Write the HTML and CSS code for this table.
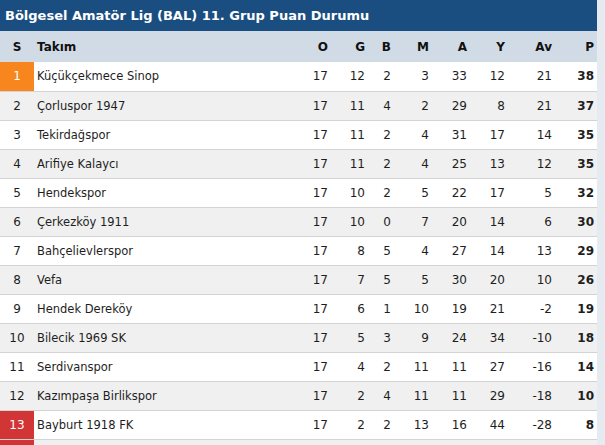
FILE: index.html
```html
<!DOCTYPE html>
<html lang="tr">
<head>
<meta charset="utf-8">
<link rel="stylesheet" href="styles.css">
</head>
<body>
<div class="standings">
  <div class="title">Bölgesel Amatör Lig (BAL) 11. Grup Puan Durumu</div>
  <table class="table">
    <colgroup>
      <col class="c-pos"><col class="c-team"><col class="c-o"><col class="c-g"><col class="c-b"><col class="c-m"><col class="c-a"><col class="c-y"><col class="c-av"><col class="c-p">
    </colgroup>
    <thead>
      <tr><th class="pos">S</th><th class="team">Takım</th><th>O</th><th>G</th><th>B</th><th>M</th><th>A</th><th>Y</th><th>Av</th><th class="pts">P</th></tr>
    </thead>
    <tbody>
      <tr><td class="pos up">1</td><td class="team">Küçükçekmece Sinop</td><td>17</td><td>12</td><td>2</td><td>3</td><td>33</td><td>12</td><td>21</td><td class="pts">38</td></tr>
      <tr><td class="pos">2</td><td class="team">Çorluspor 1947</td><td>17</td><td>11</td><td>4</td><td>2</td><td>29</td><td>8</td><td>21</td><td class="pts">37</td></tr>
      <tr><td class="pos">3</td><td class="team">Tekirdağspor</td><td>17</td><td>11</td><td>2</td><td>4</td><td>31</td><td>17</td><td>14</td><td class="pts">35</td></tr>
      <tr><td class="pos">4</td><td class="team">Arifiye Kalaycı</td><td>17</td><td>11</td><td>2</td><td>4</td><td>25</td><td>13</td><td>12</td><td class="pts">35</td></tr>
      <tr><td class="pos">5</td><td class="team">Hendekspor</td><td>17</td><td>10</td><td>2</td><td>5</td><td>22</td><td>17</td><td>5</td><td class="pts">32</td></tr>
      <tr><td class="pos">6</td><td class="team">Çerkezköy 1911</td><td>17</td><td>10</td><td>0</td><td>7</td><td>20</td><td>14</td><td>6</td><td class="pts">30</td></tr>
      <tr><td class="pos">7</td><td class="team">Bahçelievlerspor</td><td>17</td><td>8</td><td>5</td><td>4</td><td>27</td><td>14</td><td>13</td><td class="pts">29</td></tr>
      <tr><td class="pos">8</td><td class="team">Vefa</td><td>17</td><td>7</td><td>5</td><td>5</td><td>30</td><td>20</td><td>10</td><td class="pts">26</td></tr>
      <tr><td class="pos">9</td><td class="team">Hendek Dereköy</td><td>17</td><td>6</td><td>1</td><td>10</td><td>19</td><td>21</td><td>-2</td><td class="pts">19</td></tr>
      <tr><td class="pos">10</td><td class="team">Bilecik 1969 SK</td><td>17</td><td>5</td><td>3</td><td>9</td><td>24</td><td>34</td><td>-10</td><td class="pts">18</td></tr>
      <tr><td class="pos">11</td><td class="team">Serdivanspor</td><td>17</td><td>4</td><td>2</td><td>11</td><td>11</td><td>27</td><td>-16</td><td class="pts">14</td></tr>
      <tr><td class="pos">12</td><td class="team">Kazımpaşa Birlikspor</td><td>17</td><td>2</td><td>4</td><td>11</td><td>11</td><td>29</td><td>-18</td><td class="pts">10</td></tr>
      <tr><td class="pos down">13</td><td class="team">Bayburt 1918 FK</td><td>17</td><td>2</td><td>2</td><td>13</td><td>16</td><td>44</td><td>-28</td><td class="pts">8</td></tr>
      <tr><td class="pos down">14</td><td class="team">Yeni Orhangazispor</td><td>17</td><td>1</td><td>3</td><td>13</td><td>12</td><td>45</td><td>-33</td><td class="pts">6</td></tr>
    </tbody>
  </table>
</div>
</body>
</html>
```
FILE: styles.css
```css
html, body {
  margin: 0;
  padding: 0;
  background: #e6ebf1;
  overflow: hidden;
}
.standings {
  width: 597px;
  background: #ffffff;
  font-family: "DejaVu Sans", Verdana, sans-serif;
  font-size: 11px;
  color: #1e1e1e;
}
.title {
  height: 31px;
  line-height: 31px;
  background: #1b4e80;
  color: #ffffff;
  font-weight: bold;
  font-size: 13px;
  padding-left: 5px;
  white-space: nowrap;
}
.table {
  width: 597px;
  border-collapse: collapse;
  table-layout: fixed;
}
.c-pos { width: 34px; }
.c-team { width: 257px; }
.c-o { width: 40px; }
.c-g { width: 37px; }
.c-b { width: 26px; }
.c-m { width: 38px; }
.c-a { width: 38px; }
.c-y { width: 38px; }
.c-av { width: 47px; }
.c-p { width: 42px; }
th, td {
  text-align: right;
  padding: 0 3px 0 0;
  white-space: nowrap;
}
thead tr {
  height: 31px;
  background: #d1dbe5;
}
th {
  font-weight: bold;
  font-size: 12px;
  color: #111;
}
tbody tr {
  height: 29px;
  border-bottom: 1px solid #d3d3d3;
}
tbody tr:nth-child(even) {
  background: #f0f0f0;
}
.pos {
  text-align: center;
  padding: 0;
}
.team {
  text-align: left;
  padding-left: 3px;
}
td {
  font-size: 12px;
}
td.team {
  font-size: 11.5px;
}
td.pts {
  font-weight: bold;
}
.up {
  background: #f7861e;
  color: #ffffff;
}
.down {
  background: #d13535;
  color: #ffffff;
}
```
